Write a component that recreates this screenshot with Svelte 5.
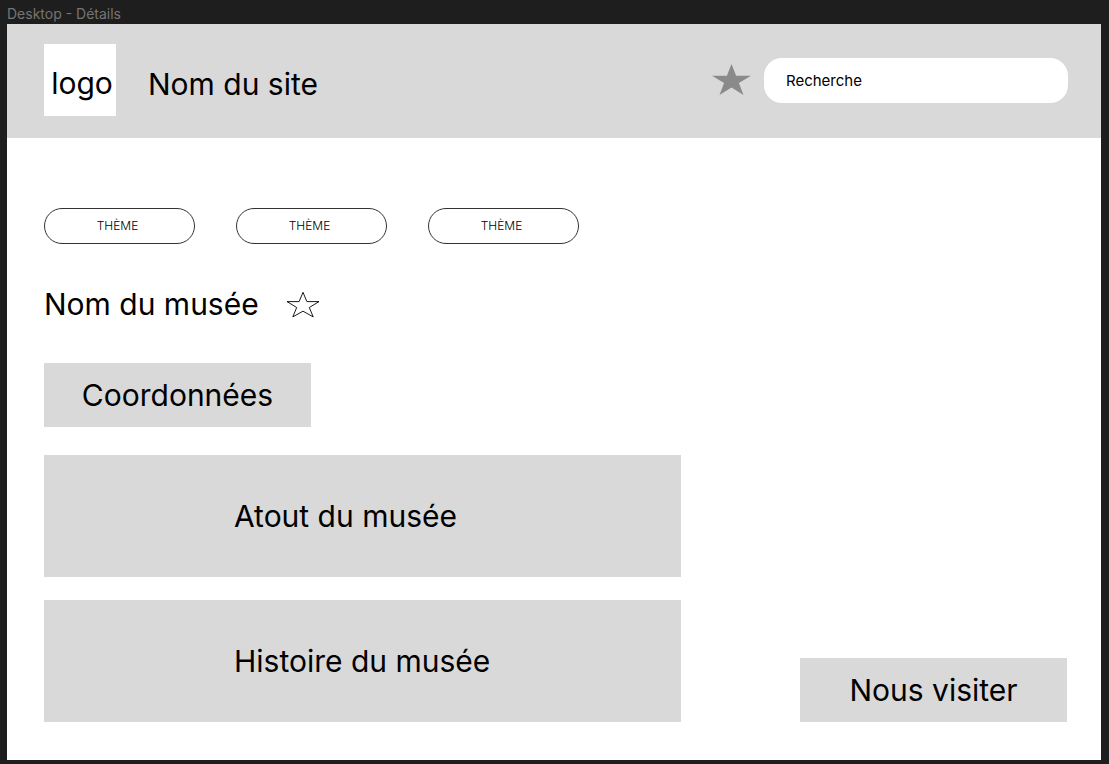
<script>
  const themes = ['THÈME', 'THÈME', 'THÈME'];
  const panels = ['Atout du musée', 'Histoire du musée'];
  let query = $state('');
</script>

<div class="canvas">
  <p class="frame-name">Desktop - Détails</p>
  <div class="frame">
    <header>
      <a class="logo" href="#accueil">logo</a>
      <span class="site">Nom du site</span>
      <button class="icon favourites" aria-label="Favoris">
        <svg width="39" height="31" viewBox="0 0 39 31" aria-hidden="true">
          <path fill="#8a8a8a" d="M19.5 0L24.1 11.8H39L26.9 19.1L31.5 31L19.5 23.6L7.5 31L12.1 19.1L0 11.8H14.9Z" />
        </svg>
      </button>
      <input type="search" placeholder="Recherche" aria-label="Recherche" bind:value={query} />
    </header>

    <main>
      <nav class="themes" aria-label="Thèmes">
        {#each themes as theme}
          <a href="#theme">{theme}</a>
        {/each}
      </nav>

      <div class="title">
        <h1>Nom du musée</h1>
        <button class="icon" aria-label="Ajouter aux favoris">
          <svg width="36" height="28" viewBox="0 0 36 28" aria-hidden="true">
            <path fill="none" stroke="#000" stroke-width="0.9" d="M18 2.3L21.9 11.6H34L24.3 17.5L28.2 26.9L18 21.2L7.8 26.9L11.7 17.5L2 11.6H14.1Z" />
          </svg>
        </button>
      </div>

      <button class="block">Coordonnées</button>

      <div class="details">
        <div class="panels">
          {#each panels as panel}
            <section><h2>{panel}</h2></section>
          {/each}
        </div>
        <button class="block">Nous visiter</button>
      </div>
    </main>
  </div>
</div>

<style>
  :global(body) {
    margin: 0;
    background: #1e1e1e;
  }

  .canvas {
    box-sizing: border-box;
    min-height: 100vh;
    display: flex;
    flex-direction: column;
    padding: 4px 8px 4px 7px;
    font-family: Inter, sans-serif;
    font-size: 30px;
    line-height: 36px;
    color: #000;
  }

  .frame-name {
    margin: 0;
    font-size: 14px;
    line-height: 20px;
    color: #757575;
  }

  .frame {
    flex: 1;
    background: #fff;
  }

  header {
    display: flex;
    align-items: center;
    height: 114px;
    box-sizing: border-box;
    padding: 0 33px 2px 37px;
    background: #d9d9d9;
  }

  .logo {
    display: flex;
    align-items: center;
    justify-content: center;
    width: 72px;
    height: 72px;
    padding: 6px 0 0 4px;
    box-sizing: border-box;
    background: #fff;
    color: inherit;
    text-decoration: none;
  }

  .site {
    padding: 8px 0 0 32px;
  }

  button {
    border: 0;
    border-radius: 0;
    font: inherit;
    color: inherit;
    cursor: pointer;
  }

  .icon {
    display: flex;
    padding: 0;
    background: none;
  }

  .favourites {
    margin: 0 13px 2px auto;
  }

  input {
    width: 304px;
    height: 45px;
    box-sizing: border-box;
    padding: 0 22px;
    border: 0;
    border-radius: 18px;
    background: #fff;
    font: inherit;
    font-size: 15px;
    line-height: 20px;
    color: #000;
    appearance: none;
  }

  input::placeholder {
    color: #000;
    opacity: 1;
  }

  main {
    display: flex;
    flex-direction: column;
    align-items: flex-start;
    padding: 70px 34px 38px 37px;
  }

  .themes {
    display: flex;
    gap: 41px;
  }

  .themes a {
    width: 151px;
    height: 36px;
    box-sizing: border-box;
    display: flex;
    align-items: center;
    justify-content: center;
    padding-right: 4px;
    border: 1px solid #333;
    border-radius: 18px;
    font-size: 12px;
    font-weight: 300;
    line-height: 16px;
    color: inherit;
    text-decoration: none;
  }

  .title {
    display: flex;
    align-items: center;
    gap: 26px;
    margin: 42px 0 41px;
  }

  h1,
  h2 {
    margin: 0;
    font-size: inherit;
    font-weight: 400;
  }

  .block {
    width: 267px;
    height: 64px;
    padding: 0;
    background: #d9d9d9;
  }

  .details {
    display: flex;
    align-items: flex-end;
    gap: 119px;
    align-self: stretch;
    margin-top: 28px;
  }

  .panels {
    flex: 1;
    display: flex;
    flex-direction: column;
    gap: 23px;
  }

  section {
    display: flex;
    align-items: center;
    height: 122px;
    padding-left: 190px;
    background: #d9d9d9;
  }
</style>
